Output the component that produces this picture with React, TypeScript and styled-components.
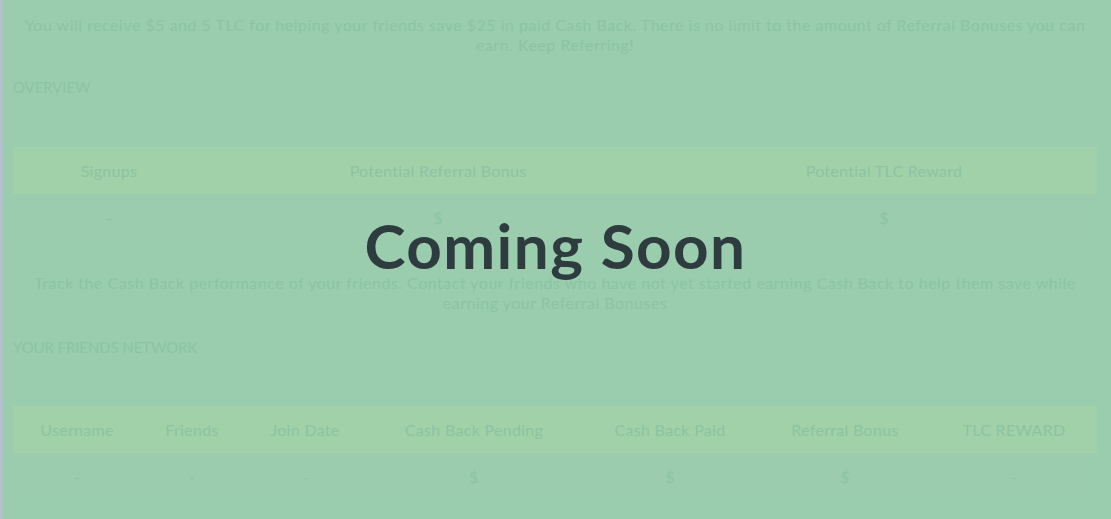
import React from "react";
import styled, { createGlobalStyle } from "styled-components";

const Global = createGlobalStyle`
  html, body { margin: 0; padding: 0; }
  body {
    background: #9acdae;
    font-family: Lato, "Noto Sans", sans-serif;
    width: 1111px;
    height: 519px;
    overflow: hidden;
  }
`;

const Shell = styled.div`
  display: flex;
  width: 1111px;
  height: 519px;
  position: relative;
`;

const Edge = styled.div`
  width: 3px;
  flex: none;
  background: #b6bfcf;
`;

const Main = styled.main`
  flex: 1;
  padding: 15px 14px 0 10px;
  display: flex;
  flex-direction: column;
  color: #8cc3a3;
`;

const Intro = styled.p<{ $top?: number }>`
  margin: ${(p) => p.$top ?? 0}px 0 0;
  text-align: center;
  font-size: 16px;
  line-height: 20px;
  letter-spacing: 0.5px;
`;

const SectionLabel = styled.h3<{ $top: number }>`
  margin: ${(p) => p.$top}px 0 0;
  font-size: 15px;
  font-weight: 400;
  line-height: 18px;
  letter-spacing: -0.1px;
`;

const Table = styled.div<{ $cols: string; $top: number }>`
  margin-top: ${(p) => p.$top}px;
  display: grid;
  grid-template-columns: ${(p) => p.$cols};
`;

const Head = styled.div`
  background: #a1d1a8;
  height: 47px;
  display: flex;
  align-items: center;
  justify-content: center;
  font-size: 16px;
  letter-spacing: 0.3px;
`;

const Cell = styled.div`
  background: #9bccad;
  height: 47px;
  display: flex;
  align-items: center;
  justify-content: center;
  font-size: 16px;
`;

const Overlay = styled.div`
  position: absolute;
  inset: 0;
  display: flex;
  align-items: center;
  justify-content: center;
  pointer-events: none;
`;

const Title = styled.h1`
  margin: 0 0 29px 0;
  font-size: 62px;
  font-weight: 700;
  color: #2e3b3f;
  letter-spacing: 1.4px;
`;

const overviewHeads = ["Signups", "Potential Referral Bonus", "Potential TLC Reward"];
const overviewVals = ["-", "$", "$"];
const friendHeads = [
  "Username",
  "Friends",
  "Join Date",
  "Cash Back Pending",
  "Cash Back Paid",
  "Referral Bonus",
  "TLC REWARD",
];
const friendVals = ["-", "-", "-", "$", "$", "$", "-"];

export default function App() {
  return (
    <>
      <Global />
      <Shell>
        <Edge />
        <Main>
          <Intro>
            You will receive $5 and 5 TLC for helping your friends save $25 in paid Cash Back. There is no
            limit to the amount of Referral Bonuses you can earn. Keep Referring!
          </Intro>
          <SectionLabel $top={23}>OVERVIEW</SectionLabel>
          <Table $cols="192px 466px 426px" $top={51}>
            {overviewHeads.map((h) => (
              <Head key={h}>{h}</Head>
            ))}
            {overviewVals.map((v, i) => (
              <Cell key={i}>{v}</Cell>
            ))}
          </Table>
          <Intro $top={32}>
            Track the Cash Back performance of your friends. Contact your friends who have not yet started
            earning Cash Back to help them save while earning your Referral Bonuses
          </Intro>
          <SectionLabel $top={25}>YOUR FRIENDS NETWORK</SectionLabel>
          <Table $cols="128px 102px 124px 214px 178px 172px 166px" $top={50}>
            {friendHeads.map((h) => (
              <Head key={h}>{h}</Head>
            ))}
            {friendVals.map((v, i) => (
              <Cell key={i}>{v}</Cell>
            ))}
          </Table>
        </Main>
        <Overlay>
          <Title>Coming Soon</Title>
        </Overlay>
      </Shell>
    </>
  );
}
